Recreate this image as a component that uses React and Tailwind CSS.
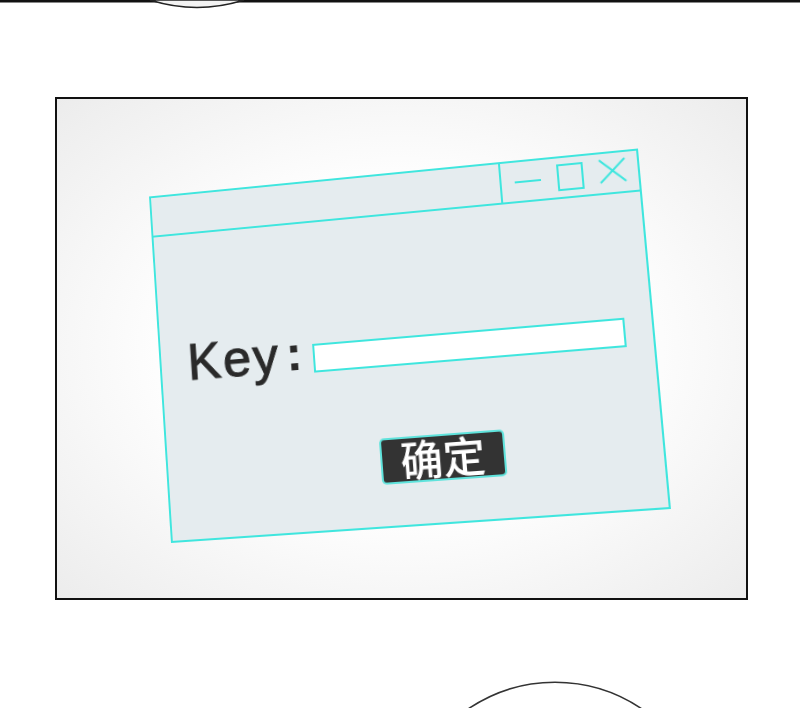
import React from 'react'

// corners of the tilted window, relative to the panel's inner box (TL, TR, BR, BL)
const WIN_W = 496
const WIN_H = 355
const corners = [[92, 97.5], [581, 49.5], [614, 410], [114, 444]]

// projective map from the WIN_W x WIN_H box onto the four corners
function quadMatrix(w, h, pts) {
  const [[x0, y0], [x1, y1], [x2, y2], [x3, y3]] = pts
  const dx1 = x1 - x2, dx2 = x3 - x2, dx3 = x0 - x1 + x2 - x3
  const dy1 = y1 - y2, dy2 = y3 - y2, dy3 = y0 - y1 + y2 - y3
  const den = dx1 * dy2 - dx2 * dy1
  const g = (dx3 * dy2 - dx2 * dy3) / den
  const k = (dx1 * dy3 - dx3 * dy1) / den
  const a = x1 - x0 + g * x1
  const b = x3 - x0 + k * x3
  const d = y1 - y0 + g * y1
  const e = y3 - y0 + k * y3
  return `matrix3d(${a / w},${d / w},0,${g / w},${b / h},${e / h},0,${k / h},0,0,1,0,${x0},${y0},0,1)`
}

const TopStrip = () => (
  <svg width="800" height="10" viewBox="0 0 800 10" className="block">
    <rect x="0" y="0" width="800" height="2.5" fill="#111" />
    <path d="M150 0 Q197 15 244 0 Z" fill="#f3f3f3" stroke="#222" strokeWidth="1.5" />
  </svg>
)

const BottomArc = () => (
  <svg width="800" height="28" viewBox="0 680 800 28" className="block">
    <path d="M468 709 A155 155 0 0 1 642 709" fill="#fff" stroke="#333" strokeWidth="1.6" />
  </svg>
)

const TiltedWindow = () => (
  <div
    className="absolute left-0 top-0 flex flex-col border-2 border-[#3fe6de] bg-[#e5ecef]"
    style={{ width: WIN_W, height: WIN_H, transformOrigin: '0 0', transform: quadMatrix(WIN_W, WIN_H, corners) }}
  >
    {/* title bar */}
    <div className="flex h-[41px] border-b-2 border-[#3fe6de]">
      <div className="flex-1" />
      <div className="flex w-[136px] items-center border-l-2 border-[#3fe6de] pl-[13px]">
        <div className="h-[2px] w-[26px] bg-[#3fe6de]" />
        <div className="ml-[16px] h-[27px] w-[26px] border-2 border-[#3fe6de]" />
        <svg width="27" height="25" viewBox="0 0 27 25" className="ml-[15px] -mt-[4px]">
          <path d="M1 1 L26 24 M26 1 L1 24" stroke="#3fe6de" strokeWidth="2" fill="none" />
        </svg>
      </div>
    </div>

    {/* body */}
    <div className="flex flex-col">
      <div className="ml-[27px] mt-[105px] flex items-center">
        <span className="text-[52px] leading-none tracking-[2px] text-[#2a2a2a] [-webkit-text-stroke:1px_#2a2a2a] [font-family:'Liberation_Sans',Arial,sans-serif]">
          Key
        </span>
        <span className="ml-[6px] text-[50px] font-bold leading-none text-[#2a2a2a] [font-family:'Liberation_Sans',Arial,sans-serif]">
          :
        </span>
        <div className="ml-[11px] mt-[12px] h-[29px] w-[310px] border-2 border-[#3fe6de] bg-white" />
      </div>
      <div className="ml-[218px] mt-[68px] h-[42px] self-start rounded-[3px] bg-[#333333] px-[18px] text-[42px] font-medium leading-[40px] text-white shadow-[0_0_0_2px_#5fe3dc] [font-family:'Noto_Sans_CJK_SC',sans-serif]">
        确定
      </div>
    </div>
  </div>
)

export default function App() {
  return (
    <div className="flex h-[708px] w-[800px] flex-col overflow-hidden bg-white">
      <TopStrip />
      <div className="relative ml-[55px] mt-[87px] h-[503px] w-[693px] border-2 border-[#111] bg-[radial-gradient(ellipse_at_center,#ffffff_45%,#ececec_100%)]">
        <TiltedWindow />
      </div>
      <div className="mt-[80px]">
        <BottomArc />
      </div>
    </div>
  )
}
